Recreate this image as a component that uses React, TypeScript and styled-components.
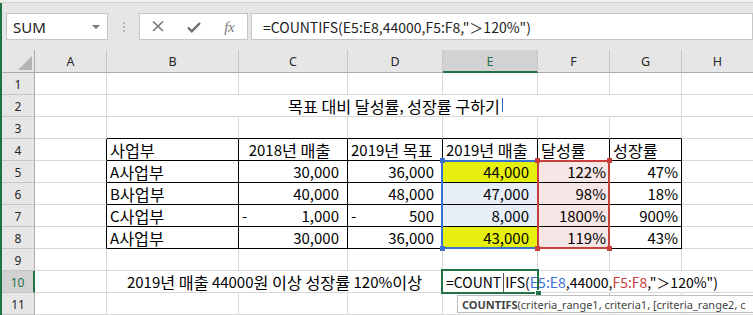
import React from 'react';
import styled, { createGlobalStyle } from 'styled-components';

const GREEN = '#217346';
const GRID = '#d8d8d8';
const BLUE = '#3c72cf';
const RED = '#c8403c';
const CELL_FONT = '"Noto Sans CJK KR", "Noto Sans", sans-serif';
const UI_FONT = '"Noto Sans", "Noto Sans CJK KR", sans-serif';

const COL_W = [72, 132, 109, 95, 95, 72, 72, 72];
const LETTERS = ['A', 'B', 'C', 'D', 'E', 'F', 'G', 'H'];
const HDR_W = 33;
const HDR_H = 23;
const ROW_H = 22;
const ROWS = 11;

const colLeft = (c: number) => HDR_W + COL_W.slice(0, c).reduce((a, b) => a + b, 0);
const rowTop = (r: number) => HDR_H + (r - 1) * ROW_H;

const GlobalStyle = createGlobalStyle`
  html, body {
    margin: 0;
    padding: 0;
    background: #fff;
  }
  body {
    width: 753px;
    height: 315px;
    overflow: hidden;
  }
`;

const Window = styled.div`
  width: 753px;
  height: 315px;
  overflow: hidden;
  background: #e6e6e6;
  display: flex;
  flex-direction: column;
`;

const TopStrip = styled.div`
  height: 2px;
  background: #efefef;
  border-bottom: 1px solid #d2d2d2;
`;

const Main = styled.div`
  flex: 1;
  border-left: 2px solid ${GREEN};
  display: flex;
  flex-direction: column;
  min-height: 0;
`;

const FormulaBar = styled.div`
  height: 47px;
  box-sizing: border-box;
  padding: 10px 0 0 4px;
  display: flex;
  align-items: flex-start;
`;

const Box = styled.div`
  height: 27px;
  box-sizing: border-box;
  background: #fff;
  border: 1px solid #c6c6c6;
  display: flex;
  align-items: center;
`;

const NameBox = styled(Box)`
  width: 102px;
  padding: 0 7px 0 6px;
  justify-content: space-between;
  font: 15px ${UI_FONT};
  color: #222;
`;

const DropArrow = styled.span`
  width: 0;
  height: 0;
  border-left: 4px solid transparent;
  border-right: 4px solid transparent;
  border-top: 4px solid #777;
  margin-top: 1px;
`;

const Grip = styled.div`
  width: 31px;
  height: 27px;
  display: flex;
  flex-direction: column;
  align-items: center;
  justify-content: center;
  gap: 2px;
  padding-left: 1px;
  box-sizing: border-box;

  i {
    width: 2px;
    height: 2px;
    background: #b5b5b5;
  }
`;

const FxButtons = styled(Box)`
  width: 109px;
`;

const FxSlot = styled.div`
  flex: 1;
  height: 100%;
  display: flex;
  align-items: center;
  justify-content: center;
  color: #777;
`;

const FxLabel = styled.span`
  font: italic 15px "Liberation Serif", serif;
  color: #7a7a7a;
  margin-top: 2px;
  letter-spacing: -0.5px;
`;

const FormulaInput = styled(Box)`
  flex: 1;
  margin-left: 3px;
  padding-left: 11px;
  font: 14px ${CELL_FONT};
  color: #1e1e1e;
  white-space: pre;
`;

const Sheet = styled.div`
  position: relative;
  flex: 1;
  background: #fff;
  display: grid;
  grid-template-columns: ${HDR_W}px ${COL_W.map((w) => `${w}px`).join(' ')};
  grid-template-rows: ${HDR_H}px repeat(${ROWS}, ${ROW_H}px);
  overflow: hidden;
`;

const Corner = styled.div`
  position: relative;
  background: #e6e6e6;
  border-right: 1px solid #ababab;
  border-bottom: 1px solid #ababab;

  &::after {
    content: '';
    position: absolute;
    right: 2px;
    bottom: 2px;
    width: 14px;
    height: 14px;
    background: #b4b4b4;
    clip-path: polygon(100% 0, 100% 100%, 0 100%);
  }
`;

const ColHead = styled.div<{ $active?: boolean }>`
  box-sizing: border-box;
  background: ${(p) => (p.$active ? '#d2d2d2' : '#e6e6e6')};
  border-right: 1px solid #c6c6c6;
  border-bottom: ${(p) => (p.$active ? `2px solid ${GREEN}` : '1px solid #ababab')};
  display: flex;
  justify-content: center;
  align-items: center;
  padding-top: ${(p) => (p.$active ? 1 : 0)}px;
  font: 12.5px ${UI_FONT};
  color: ${(p) => (p.$active ? GREEN : '#262626')};
`;

const RowHead = styled.div<{ $active?: boolean }>`
  box-sizing: border-box;
  background: ${(p) => (p.$active ? '#d2d2d2' : '#e6e6e6')};
  border-right: ${(p) => (p.$active ? `2px solid ${GREEN}` : '1px solid #ababab')};
  border-bottom: 1px solid #c6c6c6;
  display: flex;
  justify-content: center;
  align-items: center;
  padding-top: 1px;
  font: 12px ${UI_FONT};
  color: ${(p) => (p.$active ? GREEN : '#262626')};
`;

type Align = 'left' | 'right' | 'center';

const Cell = styled.div<{
  $span: number;
  $align: Align;
  $bg: string;
  $right: string;
  $bottom: string;
  $pl: number;
  $pr: number;
  $over?: boolean;
}>`
  grid-column: span ${(p) => p.$span};
  box-sizing: border-box;
  position: ${(p) => (p.$over ? 'relative' : 'static')};
  z-index: ${(p) => (p.$over ? 1 : 'auto')};
  background: ${(p) => p.$bg};
  border-right: 1px solid ${(p) => p.$right};
  border-bottom: 1px solid ${(p) => p.$bottom};
  padding: 0 ${(p) => p.$pr}px 0 ${(p) => p.$pl}px;
  display: flex;
  align-items: flex-end;
  justify-content: ${(p) =>
    p.$align === 'right' ? 'flex-end' : p.$align === 'center' ? 'center' : 'flex-start'};
  font: 15px/20px ${CELL_FONT};
  color: #000;
  white-space: pre;
  overflow: ${(p) => (p.$over ? 'visible' : 'hidden')};
`;

// Hangul runs are set a little larger so they take the width Malgun Gothic gives them
const Hangul = styled.span`
  font-size: 16.2px;
`;

const ko = (s: string) =>
  s
    .split(/([\uac00-\ud7a3][\uac00-\ud7a3 ]*[\uac00-\ud7a3]|[\uac00-\ud7a3])/)
    .map((part, i) => (/[\uac00-\ud7a3]/.test(part) ? <Hangul key={i}>{part}</Hangul> : part));

const Accounting = styled.span`
  flex: 1;
  display: flex;
  justify-content: space-between;
`;

const CellFormula = styled.span`
  font-size: 14px;
`;

const Ref = styled.span<{ $c?: string }>`
  color: ${(p) => p.$c ?? 'inherit'};
`;

const TextCaret = styled.span`
  display: inline-block;
  width: 1px;
  height: 19px;
  margin: 0 1px 0 2px;
  background: #555;
  vertical-align: -4px;
`;

const RangeBox = styled.div<{ $c: string }>`
  position: absolute;
  box-sizing: border-box;
  border: 2px solid ${(p) => p.$c};
  pointer-events: none;
`;

const Handle = styled.div<{ $c: string }>`
  position: absolute;
  width: 5px;
  height: 5px;
  background: ${(p) => p.$c};
`;

const ActiveBox = styled.div`
  position: absolute;
  box-sizing: border-box;
  border: 2px solid ${GREEN};
  z-index: 2;
`;

const FillHandle = styled.div`
  position: absolute;
  width: 5px;
  height: 5px;
  background: ${GREEN};
  border: 1px solid #fff;
  z-index: 3;
`;

const IBeam = styled.div`
  position: absolute;
  width: 1px;
  background: #2b62c0;
  z-index: 3;
`;

const Tooltip = styled.div`
  position: absolute;
  height: 18px;
  box-sizing: border-box;
  padding: 0 0 0 4px;
  background: #fff;
  border: 1px solid #bdbdbd;
  display: flex;
  align-items: center;
  font: 11px ${UI_FONT};
  color: #444;
  white-space: pre;
  overflow: hidden;
  z-index: 4;

  b {
    font-weight: 700;
  }
`;

const FormulaText = ({ colored, caret }: { colored?: boolean; caret?: boolean }) => (
  <>
    =COUNT
    {caret && <TextCaret />}
    IFS(<Ref $c={colored ? BLUE : undefined}>E5:E8</Ref>,44000,
    <Ref $c={colored ? RED : undefined}>F5:F8</Ref>,"＞120%")
  </>
);

type Spec = {
  text?: React.ReactNode;
  align?: Align;
  span?: number;
  pr?: number;
  bg?: string;
  dash?: boolean;
  over?: boolean;
};

const YELLOW = '#e7ef0f';
const LBLUE = '#e7eef8';
const PINK = '#f7e6e6';

const cells: Record<string, Spec> = {
  '2-1': { text: ko('목표 대비 달성률, 성장률 구하기'), align: 'center', span: 6 },
  '4-1': { text: ko('사업부') },
  '4-2': { text: ko('  2018년 매출') },
  '4-3': { text: ko('2019년 목표') },
  '4-4': { text: ko('2019년 매출') },
  '4-5': { text: ko('달성률') },
  '4-6': { text: ko('성장률') },
  '10-1': { text: ko('2019년 매출 44000원 이상 성장률 120%이상'), align: 'center', span: 3 },
  '10-4': {
    text: (
      <CellFormula>
        <FormulaText colored caret />
      </CellFormula>
    ),
    over: true,
  },
};

const tableRows = [
  ['A사업부', '30,000', '36,000', '44,000', '122%', '47%', YELLOW],
  ['B사업부', '40,000', '48,000', '47,000', '98%', '18%', LBLUE],
  ['C사업부', '1,000', '500', '8,000', '1800%', '900%', LBLUE],
  ['A사업부', '30,000', '36,000', '43,000', '119%', '43%', YELLOW],
];

tableRows.forEach((row, i) => {
  const r = 5 + i;
  const neg = i === 2;
  cells[`${r}-1`] = { text: ko(row[0]) };
  cells[`${r}-2`] = { text: row[1], align: 'right', pr: 8, dash: neg };
  cells[`${r}-3`] = { text: row[2], align: 'right', pr: 8, dash: neg };
  cells[`${r}-4`] = { text: row[3], align: 'right', pr: 8, bg: row[6] };
  cells[`${r}-5`] = { text: row[4], align: 'right', pr: 3, bg: PINK };
  cells[`${r}-6`] = { text: row[5], align: 'right', pr: 3 };
});

const inTable = (r: number, c: number) => r >= 4 && r <= 8 && c >= 1 && c <= 6;

const rightColor = (r: number, c: number) => {
  if (r === 10 && c >= 4 && c <= 6) return '#fff';
  return inTable(r, c) || inTable(r, c + 1) ? '#000' : GRID;
};

const bottomColor = (r: number, c: number) =>
  inTable(r, c) || inTable(r + 1, c) ? '#000' : GRID;

const ACTIVE_COL = 4;
const ACTIVE_ROW = 10;

const renderRow = (r: number) => {
  const out: React.ReactNode[] = [
    <RowHead key={`h${r}`} $active={r === ACTIVE_ROW}>
      {r}
    </RowHead>,
  ];
  let c = 0;
  while (c < COL_W.length) {
    const s = cells[`${r}-${c}`] ?? {};
    const span = s.span ?? 1;
    const end = c + span - 1;
    out.push(
      <Cell
        key={`${r}-${c}`}
        $span={span}
        $align={s.align ?? 'left'}
        $bg={s.bg ?? '#fff'}
        $right={rightColor(r, end)}
        $bottom={bottomColor(r, c)}
        $pl={3}
        $pr={s.pr ?? 3}
        $over={s.over}
      >
        {s.dash ? (
          <Accounting>
            <span>-</span>
            <span>{s.text}</span>
          </Accounting>
        ) : (
          s.text
        )}
      </Cell>
    );
    c += span;
  }
  return out;
};

const XIcon = () => (
  <svg width="12" height="11" viewBox="0 0 12 11">
    <path d="M1 0.5 L11 10 M11 0.5 L1 10" stroke="#777" strokeWidth="1.6" fill="none" />
  </svg>
);

const CheckIcon = () => (
  <svg width="14" height="11" viewBox="0 0 14 11" style={{ marginTop: 2 }}>
    <path d="M1 5.5 L4.8 9.3 L13 1" stroke="#6c6c6c" strokeWidth="2.3" fill="none" />
  </svg>
);

const App = () => {
  const eL = colLeft(4);
  const fL = colLeft(5);
  const gL = colLeft(6);
  const top5 = rowTop(5);
  const bot8 = rowTop(9) - 1;

  return (
    <>
      <GlobalStyle />
      <Window>
        <TopStrip />
        <Main>
          <FormulaBar>
            <NameBox>
              <span>SUM</span>
              <DropArrow />
            </NameBox>
            <Grip>
              <i />
              <i />
              <i />
            </Grip>
            <FxButtons>
              <FxSlot>
                <XIcon />
              </FxSlot>
              <FxSlot>
                <CheckIcon />
              </FxSlot>
              <FxSlot>
                <FxLabel>fx</FxLabel>
              </FxSlot>
            </FxButtons>
            <FormulaInput>
              <FormulaText />
            </FormulaInput>
          </FormulaBar>

          <Sheet>
            <Corner />
            {LETTERS.map((l, i) => (
              <ColHead key={l} $active={i === ACTIVE_COL}>
                {l}
              </ColHead>
            ))}
            {Array.from({ length: ROWS }, (_, i) => renderRow(i + 1))}

            <RangeBox $c={BLUE} style={{ left: eL - 2, top: top5 - 1, width: fL - eL + 3, height: bot8 - top5 + 2 }} />
            <RangeBox $c={RED} style={{ left: fL - 1, top: top5 - 1, width: gL - fL + 1, height: bot8 - top5 + 2 }} />
            <Handle $c={BLUE} style={{ left: eL - 3, top: top5 - 3 }} />
            <Handle $c={BLUE} style={{ left: eL - 3, top: bot8 - 2 }} />
            <Handle $c={RED} style={{ left: fL - 3, top: top5 - 3 }} />
            <Handle $c={RED} style={{ left: gL - 3, top: top5 - 3 }} />
            <Handle $c={RED} style={{ left: fL - 3, top: bot8 - 2 }} />
            <Handle $c={RED} style={{ left: gL - 3, top: bot8 - 2 }} />

            <ActiveBox style={{ left: eL - 2, top: rowTop(10) - 2, width: fL - eL + 3, height: ROW_H + 3 }} />
            <FillHandle style={{ left: fL - 3, top: rowTop(11) - 3 }} />

            <IBeam style={{ left: 500, top: rowTop(2) + 3, height: 14 }} />

            <Tooltip style={{ left: 455, top: rowTop(11) + 2, width: 298 }}>
              <b>COUNTIFS</b>(criteria_range1, criteria1, [criteria_range2, c
            </Tooltip>
          </Sheet>
        </Main>
      </Window>
    </>
  );
};

export default App;
